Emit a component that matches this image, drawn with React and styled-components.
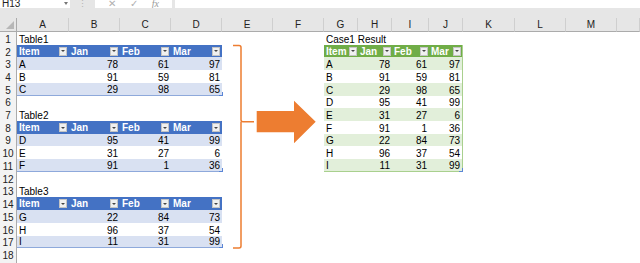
import React from 'react';
import styled, { createGlobalStyle } from 'styled-components';

const GlobalStyle = createGlobalStyle`
  html, body {
    margin: 0;
    padding: 0;
    background: #fff;
  }
  body {
    font-family: "Liberation Sans", Arial, sans-serif;
    font-size: 10px;
    color: #000;
  }
`;

const COLS = '17px 52px 51px 51px 51px 51px 51px 34px 34px 37px 34px 52px 51px 51px 1fr';
const ROW_H = '12.72px';

const TONES = {
  blue: { head: '#4472c4', band: '#d9e1f2', line: '#8ea9db' },
  green: { head: '#70ad47', band: '#e2efda', line: '#a9d08e' },
};

const Page = styled.div`
  position: relative;
  width: 640px;
  height: 263px;
  overflow: hidden;
  background: #fff;
`;

const FormulaArea = styled.div`
  background: #e6e6e6;
  padding-bottom: 10px;
`;

const FormulaBar = styled.div`
  display: flex;
  height: 8px;
  overflow: hidden;
`;

const NameBox = styled.div`
  position: relative;
  width: 70px;
  background: #fff;
  padding-left: 2px;
  box-sizing: border-box;
  line-height: 8px;
  font-size: 10px;
  color: #222;
`;

const NameArrow = styled.span`
  position: absolute;
  right: 2px;
  top: 2px;
  width: 0;
  height: 0;
  border-left: 2.5px solid transparent;
  border-right: 2.5px solid transparent;
  border-top: 3px solid #777;
`;

const Grip = styled.div`
  width: 25px;
  display: flex;
  justify-content: center;
  color: #b4b4b4;
  font-size: 9px;
  line-height: 8px;
`;

const EditButtons = styled.div`
  width: 77px;
  background: #fff;
  display: flex;
  align-items: flex-end;
  justify-content: space-around;
  padding: 0 6px;
  box-sizing: border-box;
  color: #b0b0b0;
  font-size: 10px;
  line-height: 8px;
`;

const FxLabel = styled.span`
  font-family: "Liberation Serif", serif;
  font-style: italic;
  color: #9a9a9a;
`;

const FormulaInput = styled.div`
  flex: 1;
  margin-left: 3px;
  background: #fff;
`;

const Row = styled.div`
  display: grid;
  grid-template-columns: ${COLS};
  height: ${(p) => p.$h || ROW_H};
`;

const ColHead = styled.div`
  position: relative;
  background: #e6e6e6;
  border-bottom: 1px solid #ababab;
  border-right: 1px solid ${(p) => (p.$corner ? '#ababab' : '#cfcfcf')};
  display: flex;
  align-items: flex-end;
  justify-content: center;
  padding-bottom: 1px;
  line-height: 11px;
  font-size: 10px;
  color: #222;
  box-sizing: border-box;
`;

const SelectAll = styled.span`
  position: absolute;
  right: 2px;
  bottom: 2px;
  width: 0;
  height: 0;
  border-left: 8px solid transparent;
  border-bottom: 8px solid #b7b7b7;
`;

const RowHead = styled.div`
  background: #f3f3f3;
  border-right: 1px solid #ababab;
  box-sizing: border-box;
  display: flex;
  align-items: flex-end;
  justify-content: center;
  line-height: 11px;
  font-size: 10px;
  color: #222;
`;

const Cell = styled.div`
  position: relative;
  box-sizing: border-box;
  display: flex;
  align-items: ${(p) => (p.$fill === 'head' ? 'center' : 'flex-end')};
  justify-content: ${(p) => (p.$num ? 'flex-end' : 'space-between')};
  padding: ${(p) => (p.$num ? '0 2px 0 0' : '0 0 0 2px')};
  white-space: nowrap;
  overflow: visible;
  font-size: 10px;
  line-height: 11px;
  background: ${(p) =>
    p.$fill === 'head' ? TONES[p.$tone].head : p.$fill === 'band' ? TONES[p.$tone].band : 'transparent'};
  color: ${(p) => (p.$fill === 'head' ? '#fff' : '#000')};
  font-weight: ${(p) => (p.$fill === 'head' ? 'bold' : 'normal')};
  border-bottom: ${(p) => (p.$last ? `1px solid ${TONES[p.$tone].line}` : 'none')};
  border-right: ${(p) => (p.$edge ? `1px solid ${TONES[p.$tone].line}` : 'none')};
  z-index: ${(p) => (p.$title ? 1 : 0)};

  &::after {
    content: '';
    display: ${(p) => (p.$handle ? 'block' : 'none')};
    position: absolute;
    right: -1px;
    bottom: -1px;
    width: 3px;
    height: 3px;
    border-right: 1px solid #5b86d6;
    border-bottom: 1px solid #5b86d6;
  }
`;

const HeadText = styled.span`
  line-height: 12px;
  padding-top: 1px;
`;

const Dropdown = styled.span`
  flex: none;
  width: 8px;
  height: 9px;
  margin-right: ${(p) => (p.$tight ? '1px' : '2px')};
  background: #f0f0f0;
  border: 1px solid #c4c4c4;
  box-sizing: border-box;
  display: flex;
  align-items: center;
  justify-content: center;

  &::before {
    content: '';
    width: 0;
    height: 0;
    border-left: 2px solid transparent;
    border-right: 2px solid transparent;
    border-top: 2px solid #444;
  }
`;

const Overlay = styled.svg`
  position: absolute;
  left: 0;
  top: 0;
  pointer-events: none;
`;

const HEADERS = ['Item', 'Jan', 'Feb', 'Mar'];

const blueTable = {
  1: { title: 'Table1' },
  2: { header: true },
  3: { data: ['A', 78, 61, 97], band: true },
  4: { data: ['B', 91, 59, 81] },
  5: { data: ['C', 29, 98, 65], band: true, last: true },
  7: { title: 'Table2' },
  8: { header: true },
  9: { data: ['D', 95, 41, 99], band: true },
  10: { data: ['E', 31, 27, 6] },
  11: { data: ['F', 91, 1, 36], band: true, last: true },
  13: { title: 'Table3' },
  14: { header: true },
  15: { data: ['G', 22, 84, 73], band: true },
  16: { data: ['H', 96, 37, 54] },
  17: { data: ['I', 11, 31, 99], band: true, last: true },
};

const resultRows = [
  ['A', 78, 61, 97],
  ['B', 91, 59, 81],
  ['C', 29, 98, 65],
  ['D', 95, 41, 99],
  ['E', 31, 27, 6],
  ['F', 91, 1, 36],
  ['G', 22, 84, 73],
  ['H', 96, 37, 54],
  ['I', 11, 31, 99],
];

const greenTable = { 1: { title: 'Case1 Result' }, 2: { header: true } };
resultRows.forEach((data, i) => {
  greenTable[i + 3] = { data, band: i % 2 === 0, last: i === resultRows.length - 1 };
});

const TableCells = ({ spec, tone, edge, tight }) => {
  if (!spec) return [0, 1, 2, 3].map((i) => <Cell key={i} $tone={tone} />);
  if (spec.title) {
    return [
      <Cell key="t" $tone={tone} $title>
        {spec.title}
      </Cell>,
      ...[1, 2, 3].map((i) => <Cell key={i} $tone={tone} />),
    ];
  }
  if (spec.header) {
    return HEADERS.map((h, i) => (
      <Cell key={h} $tone={tone} $fill="head" $edge={edge && i === 3}>
        <HeadText>{h}</HeadText>
        <Dropdown $tight={tight} />
      </Cell>
    ));
  }
  return spec.data.map((v, i) => (
    <Cell
      key={i}
      $tone={tone}
      $num={i > 0}
      $fill={spec.band ? 'band' : undefined}
      $last={spec.last}
      $edge={edge && i === 3}
      $handle={spec.last && i === 3}
    >
      {v}
    </Cell>
  ));
};

const LETTERS = ['A', 'B', 'C', 'D', 'E', 'F', 'G', 'H', 'I', 'J', 'K', 'L', 'M', ''];

const App = () => {
  const rows = Array.from({ length: 19 }, (_, i) => i + 1);
  return (
    <Page>
      <GlobalStyle />
      <FormulaArea>
        <FormulaBar>
          <NameBox>
            H13
            <NameArrow />
          </NameBox>
          <Grip>⋮</Grip>
          <EditButtons>
            <span>✕</span>
            <span>✓</span>
            <FxLabel>fx</FxLabel>
          </EditButtons>
          <FormulaInput />
        </FormulaBar>
      </FormulaArea>

      <Row $h="14px">
        <ColHead $corner>
          <SelectAll />
        </ColHead>
        {LETTERS.map((l, i) => (
          <ColHead key={i}>{l}</ColHead>
        ))}
      </Row>

      {rows.map((r) => (
        <Row key={r}>
          <RowHead>{r}</RowHead>
          <TableCells spec={blueTable[r]} tone="blue" />
          <Cell $tone="blue" />
          <Cell $tone="blue" />
          <TableCells spec={greenTable[r]} tone="green" edge={r > 1 && r < 12} tight />
          <Cell $tone="blue" />
          <Cell $tone="blue" />
          <Cell $tone="blue" />
          <Cell $tone="blue" />
        </Row>
      ))}

      <Overlay width="640" height="263" viewBox="0 0 640 263">
        <path
          d="M233 45.5 H239 Q241 45.5 241 47.5 V119.7 Q241 121.7 243 121.7 H254 M241 121.7 V246 Q241 248 239 248 H233"
          fill="none"
          stroke="#ed7d31"
          strokeWidth="1.5"
        />
        <polygon
          points="256.7,111 294,111 294,100.7 315.7,121.7 294,143.3 294,132.3 256.7,132.3"
          fill="#ed7d31"
        />
      </Overlay>
    </Page>
  );
};

export default App;
